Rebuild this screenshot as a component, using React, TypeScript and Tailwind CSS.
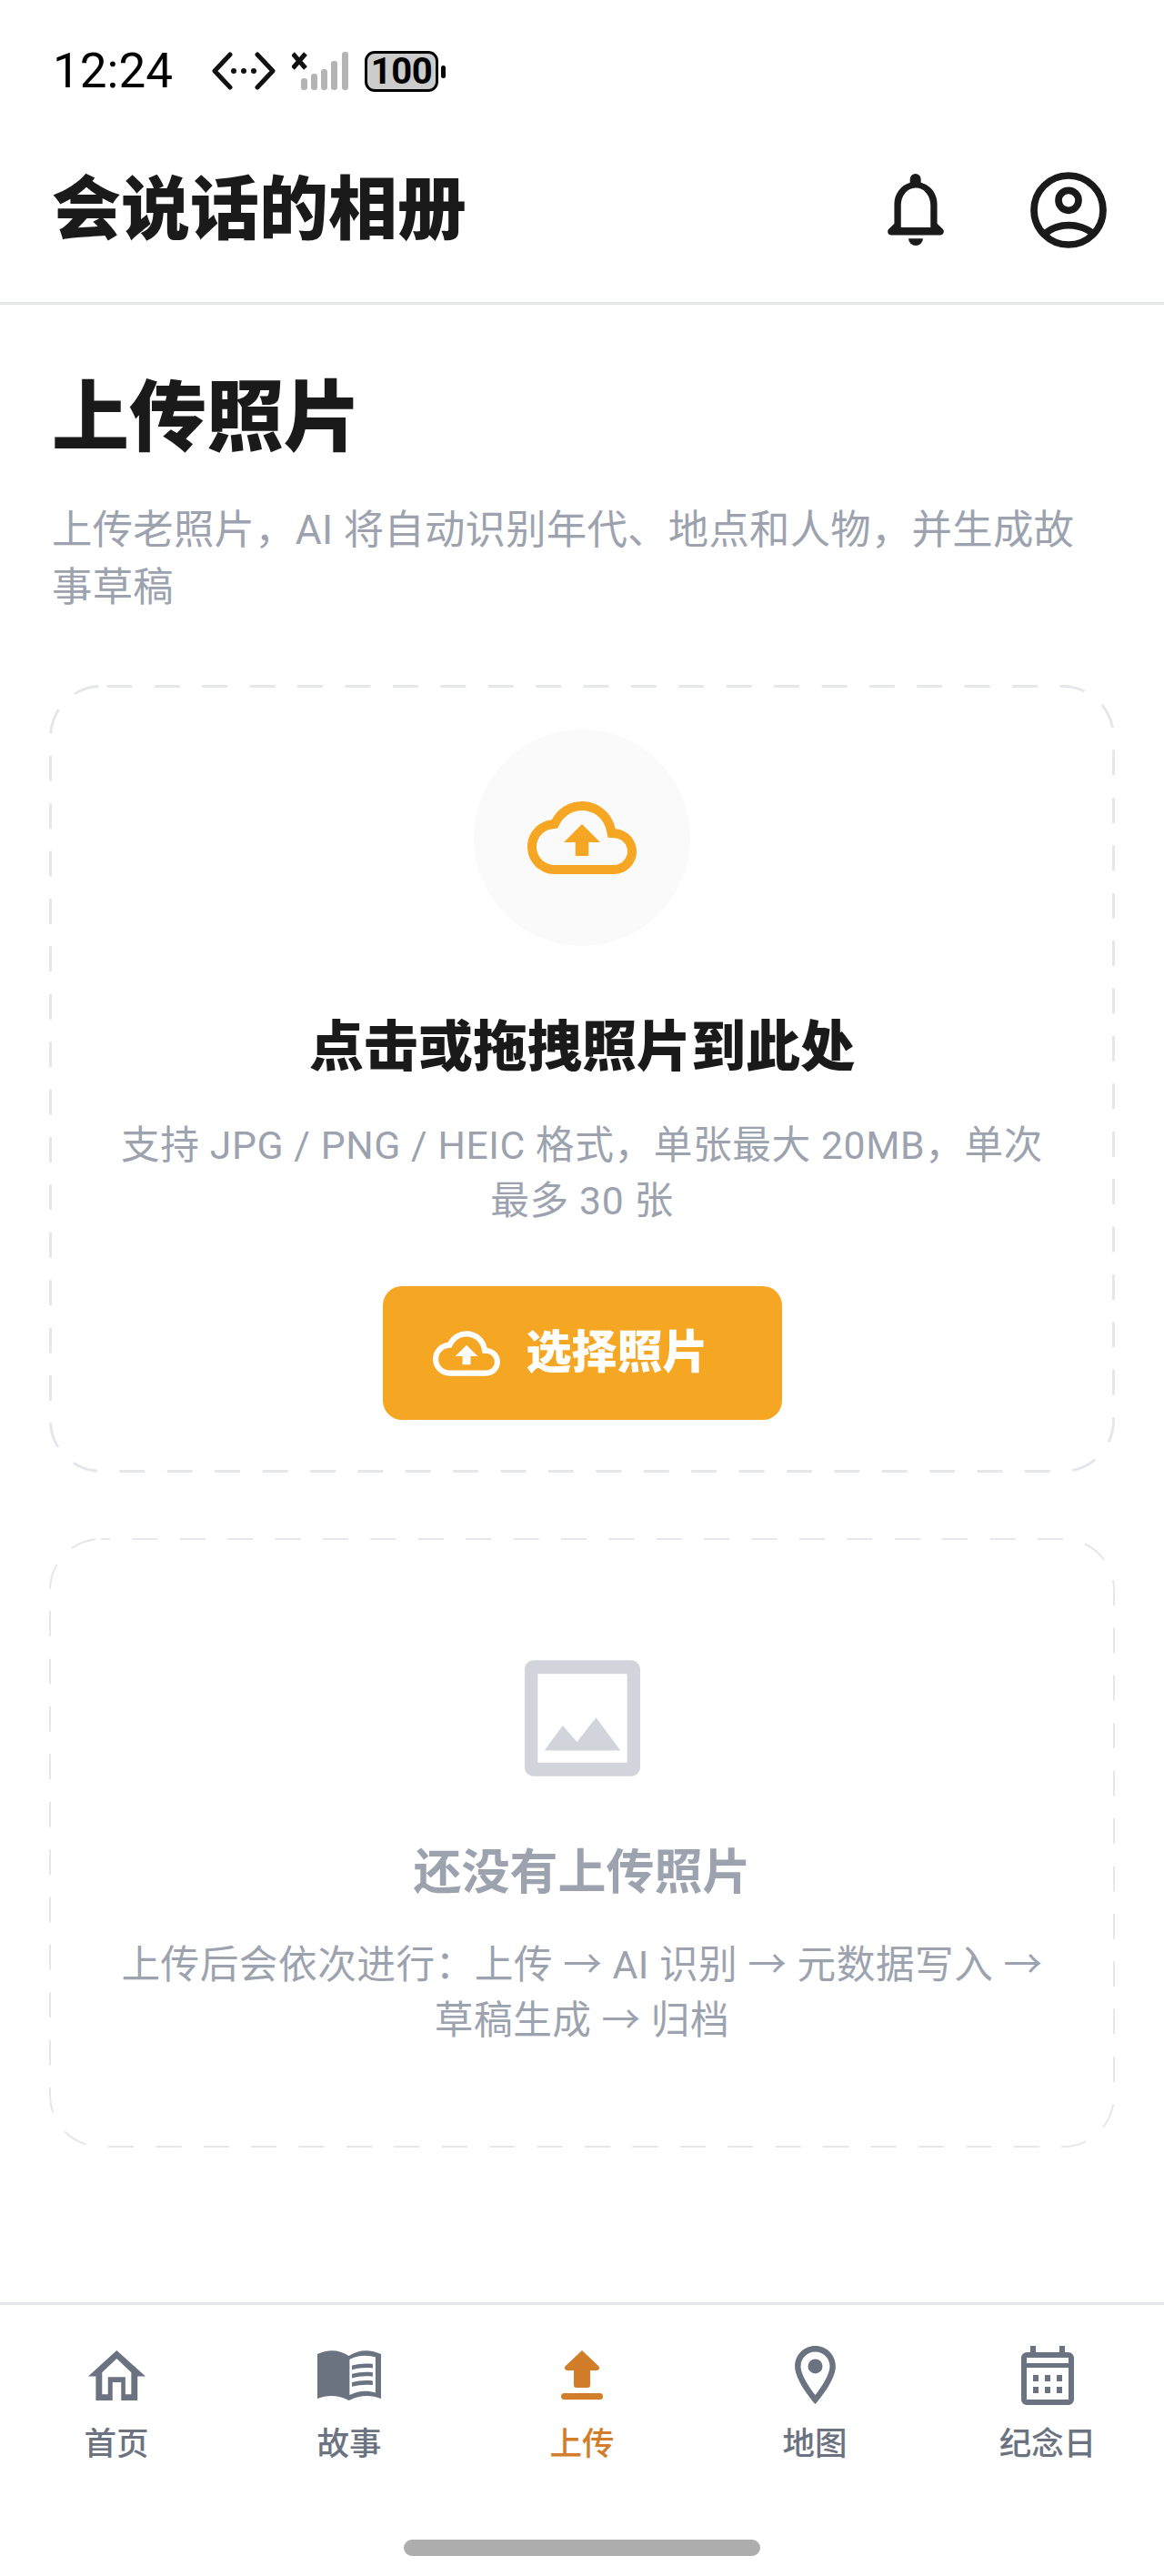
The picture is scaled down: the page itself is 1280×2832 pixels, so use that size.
import type { ReactNode } from "react";

const CLOUD =
  "M19.35 10.04C18.67 6.59 15.64 4 12 4 9.11 4 6.6 5.64 5.35 8.04 2.34 8.36 0 10.91 0 14c0 3.31 2.69 6 6 6h13c2.76 0 5-2.24 5-5 0-2.64-2.05-4.78-4.65-4.96zM19 18H6c-2.21 0-4-1.79-4-4 0-2.05 1.53-3.76 3.56-3.97l1.07-.11.5-.95C8.08 7.14 9.94 6 12 6c2.62 0 4.88 1.86 5.39 4.43l.3 1.5 1.53.11c1.56.1 2.78 1.41 2.78 2.96 0 1.65-1.35 3-3 3zM8 13h2.55v3h2.9v-3H16l-4-4z";

function CloudIcon({ size, color }: { size: number; color: string }) {
  return (
    <svg width={size} height={size} viewBox="0 0 24 24" fill={color}>
      <path d={CLOUD} />
    </svg>
  );
}

function DashedOutline({ w, h, stroke, offset }: { w: number; h: number; stroke: number; offset: number }) {
  return (
    <svg className="absolute inset-0 pointer-events-none" width={w} height={h} fill="none">
      <rect
        x={stroke / 2}
        y={stroke / 2}
        width={w - stroke}
        height={h - stroke}
        rx="56"
        stroke="#e5e7eb"
        strokeWidth={stroke}
        strokeDasharray="28 24.4"
        strokeDashoffset={offset}
      />
    </svg>
  );
}

function StatusBar() {
  return (
    <div className="h-[130px] flex items-start pl-[58px] pt-[57px] text-black">
      <span className="font-['Roboto','sans-serif'] text-[53px] leading-[42px] w-[175px]">12:24</span>
      <svg width="70" height="42" viewBox="0 0 70 42" fill="none" stroke="#111" strokeWidth="5" strokeLinecap="round" strokeLinejoin="round">
        <path d="M20 3 3 21l17 18M50 3l17 18-17 18" />
        <g fill="#111" stroke="none">
          <circle cx="24" cy="21" r="3" />
          <circle cx="35" cy="21" r="3" />
          <circle cx="46" cy="21" r="3" />
        </g>
      </svg>
      <svg className="ml-[18px]" width="63" height="42" viewBox="0 0 63 42">
        <path d="M1 2l14 16M15 2 1 18" stroke="#111" strokeWidth="5" fill="none" />
        <g fill="#b4b4b4">
          <rect x="10" y="29" width="7" height="13" rx="3" />
          <rect x="21" y="24" width="7" height="18" rx="3" />
          <rect x="32" y="19" width="7" height="23" rx="3" />
          <rect x="43" y="10" width="7" height="32" rx="3" />
          <rect x="55" y="0" width="7" height="42" rx="3" />
        </g>
      </svg>
      <div className="ml-[17px] -mt-[1px] flex items-center">
        <div className="w-[81px] h-[45px] rounded-[11px] border-[3px] border-black bg-[#cccccc] flex items-center justify-center font-['Roboto','sans-serif'] font-bold text-[40px] leading-none tracking-[-0.5px]">
          100
        </div>
        <div className="ml-[3px] w-[5px] h-[14px] rounded-full bg-black" />
      </div>
    </div>
  );
}

function BellIcon() {
  return (
    <svg width="62" height="79" viewBox="228 135 186 238" fill="#1a1a1a" fillRule="evenodd">
      <path d="M302 153a18 18 0 0 1 36 0v11c32 9 54 37 54 71v65l19 19c6 6 2 19-8 19H239c-10 0-14-13-8-19l19-19v-65c0-34 22-62 52-71zM272 313h98v-73c0-32-21-58-49-58s-49 26-49 58z" />
      <path d="M297 350h48a24 23 0 0 1-48 0z" />
    </svg>
  );
}

function UserIcon() {
  return (
    <svg width="84" height="84" viewBox="698 127 252 252" fill="none" stroke="#1a1a1a" strokeWidth="23">
      <circle cx="824" cy="253" r="114" />
      <circle cx="824" cy="221" r="33" />
      <path d="M746 330c46-36 110-36 160 0" />
    </svg>
  );
}

function NavItem({ icon, label, active }: { icon: ReactNode; label: string; active?: boolean }) {
  return (
    <div className="flex flex-col items-center">
      <div className="h-[66px] flex items-center justify-center">{icon}</div>
      <span className={active ? "mt-[19px] text-[35.5px] leading-[48px] font-medium text-[#d17d2a]" : "mt-[19px] text-[35.5px] leading-[48px] font-medium text-[#6b7280]"}>
        {label}
      </span>
    </div>
  );
}

const NAV = [
  {
    label: "首页",
    icon: (
      <svg width="63" height="55" viewBox="148 128 165 164" preserveAspectRatio="none" fill="#6b7280" fillRule="evenodd">
        <path d="M230 128l83 85h-23v79h-47v-60h-25v60h-48v-79h-22zM230 155l-42 45v72h17v-57h50v57h17v-72z" />
      </svg>
    ),
  },
  {
    label: "故事",
    icon: (
      <svg width="70" height="55" viewBox="807 140 184 166" preserveAspectRatio="none" fill="#6b7280">
        <path fillRule="evenodd" d="M807 152c30-16 62-16 91 6 29-22 62-22 93-6v148c-31-14-62-12-93 6-29-18-60-20-91-6zM900 170v118c24-14 50-17 75-8V162c-26-8-52-6-75 8z" />
        <path d="M907 204c20-6 40-8 60-5v-14c-20-3-40-1-60 5zM907 232c20-6 40-8 60-5v-14c-20-3-40-1-60 5zM907 260c20-6 40-8 60-5v-14c-20-3-40-1-60 5z" />
      </svg>
    ),
  },
  {
    label: "上传",
    active: true,
    icon: (
      <svg width="46" height="54" viewBox="0 0 46 54" fill="#d17d2a">
        <path d="M23 0l18 17c2 2 1 5-2 5h-7v16c0 2-1 3-3 3H17c-2 0-3-1-3-3V22H7c-3 0-4-3-2-5z" />
        <rect x="0" y="47" width="46" height="7" rx="3.5" />
      </svg>
    ),
  },
  {
    label: "地图",
    icon: (
      <svg width="45" height="64" viewBox="5 2 14 20" fill="#6b7280">
        <path d="M12 2C8.13 2 5 5.13 5 9c0 5.25 7 13 7 13s7-7.75 7-13c0-3.87-3.13-7-7-7zM7 9c0-2.76 2.24-5 5-5s5 2.24 5 5c0 2.88-2.88 7.19-5 9.88C9.92 16.21 7 11.85 7 9z" />
        <circle cx="12" cy="9" r="2.5" />
      </svg>
    ),
  },
  {
    label: "纪念日",
    icon: (
      <svg width="58" height="65" viewBox="0 0 58 65" fill="#6b7280">
        <path fillRule="evenodd" d="M6 7h4V0h6v7h26V0h6v7h4c3 0 6 3 6 6v46c0 3-3 6-6 6H6c-3 0-6-3-6-6V13c0-3 3-6 6-6zM6 13v6h46v-6zM6 24v35h46V24z" />
        <rect x="13" y="32" width="6" height="7" />
        <rect x="26" y="32" width="6" height="7" />
        <rect x="39" y="32" width="6" height="7" />
        <rect x="13" y="45" width="6" height="7" />
        <rect x="26" y="45" width="6" height="7" />
        <rect x="39" y="45" width="6" height="7" />
      </svg>
    ),
  },
];

export default function App() {
  return (
    <div lang="zh-CN" className="min-h-[2832px] flex flex-col bg-white font-['Roboto','Noto_Sans_CJK_SC',sans-serif]">
      <StatusBar />

      <header className="h-[205px] flex items-center justify-between pl-[57px] border-b-[3px] border-[#e5e7eb]">
        <h1 className="text-[76px] leading-[100px] font-black text-[#1a1a1a] -mt-[1px]">会说话的相册</h1>
        <div className="flex items-center -mt-[1px]">
          <BellIcon />
          <div className="ml-[95px] mr-[63px]">
            <UserIcon />
          </div>
        </div>
      </header>

      <main className="flex-1 px-[54px] pt-[69px]">
        <div className="pl-[3px] pr-[12px]">
          <h2 className="text-[85px] leading-[112px] font-black text-[#1a1a1a]">上传照片</h2>
          <p className="mt-[36px] text-[44.4px] leading-[63px] text-[#9ca3af] tracking-[0.25px]">
            上传老照片，AI 将自动识别年代、地点和人物，并生成故事草稿
          </p>
        </div>

        <section className="relative mt-[75px] h-[866px] pt-[49px] flex flex-col items-center">
          <DashedOutline w={1172} h={866} stroke={3} offset={-6} />
          <div className="w-[238px] h-[238px] rounded-full bg-[#fafafa] flex items-center justify-center">
            <CloudIcon size={120} color="#f5a623" />
          </div>
          <h3 className="mt-[72px] text-[60px] leading-[80px] font-black text-[#1a1a1a]">点击或拖拽照片到此处</h3>
          <p className="mt-[37px] px-[70px] text-center text-[42.67px] leading-[61px] text-[#9ca3af] tracking-[0.6px]">
            支持 JPG / PNG / HEIC 格式，单张最大 20MB，单次最多 30 张
          </p>
          <button className="mt-[63px] w-[439px] h-[147px] rounded-[21px] bg-[#f5a623] flex items-center justify-center gap-[29px] pr-[26px] text-white text-[50px] font-black">
            <CloudIcon size={74} color="#ffffff" />
            <span>选择照片</span>
          </button>
        </section>

        <section className="relative mt-[72px] h-[670px] pt-[134px] flex flex-col items-center">
          <DashedOutline w={1172} h={670} stroke={2} offset={18} />
          <svg width="127" height="128" viewBox="110 73 380 382" fill="#d1d5db">
            <path fillRule="evenodd" d="M140 73h320c17 0 30 13 30 30v322c0 17-13 30-30 30H140c-17 0-30-13-30-30V103c0-17 13-30 30-30zM153 118v292h294V118z" />
            <path d="M175 370l60-82 47 54 63-80 80 108z" />
          </svg>
          <h3 className="mt-[68px] text-[53px] leading-[76px] font-bold text-[#9ca3af]">还没有上传照片</h3>
          <p className="mt-[33px] px-[70px] text-center text-[42.67px] leading-[61px] text-[#9ca3af] tracking-[0.5px]">
            上传后会依次进行：上传 → AI 识别 → 元数据写入 → 草稿生成 → 归档
          </p>
        </section>
      </main>

      <footer className="border-t-[3px] border-[#e5e7eb]">
        <nav className="grid grid-cols-5 pt-[44px]">
          {NAV.map((item) => (
            <NavItem key={item.label} icon={item.icon} label={item.label} active={item.active} />
          ))}
        </nav>
        <div className="mt-[81px] mb-[22px] mx-auto w-[392px] h-[18px] rounded-full bg-[#aeaeae]" />
      </footer>
    </div>
  );
}
